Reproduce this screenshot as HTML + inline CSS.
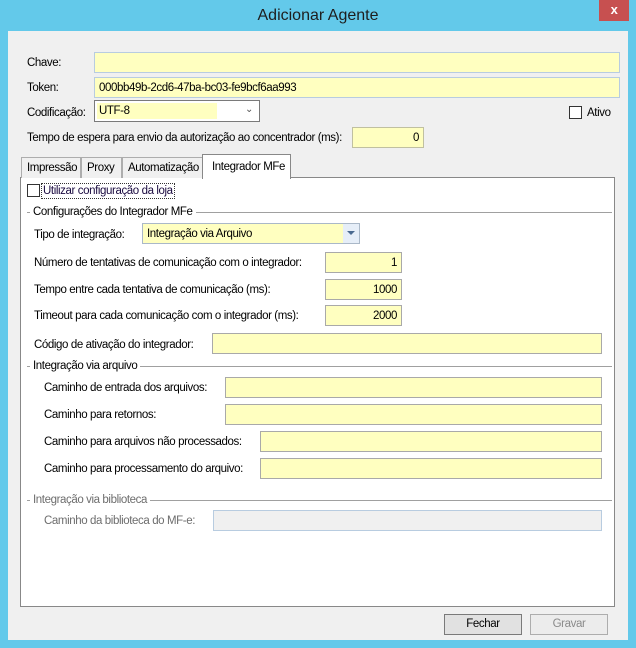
<!DOCTYPE html>
<html><head><meta charset="utf-8"><style>
*{box-sizing:border-box;margin:0;padding:0}
body{width:636px;height:648px;background:#63c9ea;font-family:"Liberation Sans",sans-serif;font-size:11.5px;letter-spacing:-0.4px;color:#000;position:relative;overflow:hidden}
.a{position:absolute;white-space:nowrap}
.in{position:absolute;background:#ffffc0;border:1px solid #a9a9a9;height:21px;padding:4px 4px 0;line-height:13px;white-space:nowrap}
.blue{border-color:#b8cce0}
.r{text-align:right}
.lbl{position:absolute;white-space:nowrap;line-height:14px}
.grp{position:absolute;height:1px;background:#a0a0a0}
.tab{position:absolute;top:157px;height:21px;border:1px solid #adadad;border-bottom:none;background:#f0f0f0;padding:3px 0 0 5px;line-height:14px;white-space:nowrap;overflow:hidden}
.btn{position:absolute;top:614px;height:21px;width:78px;border:1px solid #adadad;background:#e1e1e1;text-align:center;line-height:19px}
.cb{position:absolute;width:13px;height:13px;border:1px solid #333;background:#fff}
</style></head><body>
<div class="a" style="left:0;top:0;width:636px;height:31px;text-align:center;font-size:16px;line-height:31px;color:#1e1e1e;letter-spacing:0">Adicionar Agente</div>
<div class="a" style="left:599px;top:0;width:30px;height:21px;background:#c75050;color:#fff;text-align:center;font-weight:bold;font-size:13px;line-height:20px">x</div>
<div class="a" style="left:8px;top:31px;width:620px;height:609px;background:#f0f0f0"></div>

<div class="lbl" style="left:27px;top:56px">Chave:</div>
<div class="in blue" style="left:94px;top:52px;width:526px"></div>
<div class="lbl" style="left:27px;top:81px">Token:</div>
<div class="in blue" style="left:94px;top:77px;width:526px">000bb49b-2cd6-47ba-bc03-fe9bcf6aa993</div>
<div class="lbl" style="left:27px;top:106px">Codificação:</div>
<div class="in" style="left:94px;top:100px;width:166px;height:22px;background:#fff;border-color:#7a7a7a;padding:2px"><div style="background:#ffffc0;width:120px;height:16px;padding:2px 2px 0">UTF-8</div><span class="a" style="left:150px;top:2px;color:#555;font-size:10px">&#8964;</span></div>
<div class="cb" style="left:569px;top:106px"></div>
<div class="lbl" style="left:587px;top:106px">Ativo</div>
<div class="lbl" style="left:27px;top:131px">Tempo de espera para envio da autorização ao concentrador (ms):</div>
<div class="in r" style="left:352px;top:127px;width:72px;border-color:#c0c0a0">0</div>

<div class="a" style="left:20px;top:177px;width:595px;height:430px;background:#fff;border:1px solid #888"></div>
<div class="tab" style="left:21px;width:60px">Impressão</div>
<div class="tab" style="left:81px;width:41px">Proxy</div>
<div class="tab" style="left:122px;width:81px">Automatização</div>
<div class="tab" style="left:202px;top:154px;width:89px;height:25px;background:#fff;border-color:#888;padding-top:5px;padding-left:9px">Integrador MFe</div>

<div class="cb" style="left:27px;top:184px"></div>
<div class="lbl" style="left:41px;top:183px;border:1px dotted #333;padding:0 1px;color:#1a0a40">Utilizar configuração da loja</div>

<div class="grp" style="left:27px;top:212px;width:585px"></div>
<div class="lbl" style="left:30px;top:205px;background:#fff;padding:0 3px">Configurações do Integrador MFe</div>
<div class="lbl" style="left:34px;top:228px">Tipo de integração:</div>
<div class="in" style="left:142px;top:223px;width:218px;border-color:#aab8c8;line-height:14px;padding-top:3px">Integração via Arquivo<div class="a" style="right:0;top:0;width:16px;height:19px;background:#e6eef8"><div style="margin:7px 0 0 4px;border-left:4px solid transparent;border-right:4px solid transparent;border-top:4px solid #4a6a90;width:0"></div></div></div>
<div class="lbl" style="left:34px;top:256px">Número de tentativas de comunicação com o integrador:</div>
<div class="in r" style="left:325px;top:252px;width:77px">1</div>
<div class="lbl" style="left:34px;top:283px">Tempo entre cada tentativa de comunicação (ms):</div>
<div class="in r" style="left:325px;top:279px;width:77px">1000</div>
<div class="lbl" style="left:34px;top:309px">Timeout para cada comunicação com o integrador (ms):</div>
<div class="in r" style="left:325px;top:305px;width:77px">2000</div>
<div class="lbl" style="left:34px;top:338px">Código de ativação do integrador:</div>
<div class="in" style="left:212px;top:333px;width:390px"></div>

<div class="grp" style="left:27px;top:366px;width:585px"></div>
<div class="lbl" style="left:30px;top:359px;background:#fff;padding:0 3px">Integração via arquivo</div>
<div class="lbl" style="left:44px;top:381px">Caminho de entrada dos arquivos:</div>
<div class="in" style="left:225px;top:377px;width:377px"></div>
<div class="lbl" style="left:44px;top:408px">Caminho para retornos:</div>
<div class="in" style="left:225px;top:404px;width:377px"></div>
<div class="lbl" style="left:44px;top:435px">Caminho para arquivos não processados:</div>
<div class="in" style="left:260px;top:431px;width:342px"></div>
<div class="lbl" style="left:44px;top:462px">Caminho para processamento do arquivo:</div>
<div class="in" style="left:260px;top:458px;width:342px"></div>

<div class="grp" style="left:27px;top:500px;width:585px"></div>
<div class="lbl" style="left:30px;top:493px;background:#fff;padding:0 3px;color:#6d6d6d">Integração via biblioteca</div>
<div class="lbl" style="left:44px;top:514px;color:#6d6d6d">Caminho da biblioteca do MF-e:</div>
<div class="in" style="left:213px;top:510px;width:389px;background:#f0f0f0;border-color:#b8cce0"></div>

<div class="btn" style="left:444px;border-color:#7a7a7a">Fechar</div>
<div class="btn" style="left:530px;color:#8a8a8a;background:#ececec">Gravar</div>
</body></html>
